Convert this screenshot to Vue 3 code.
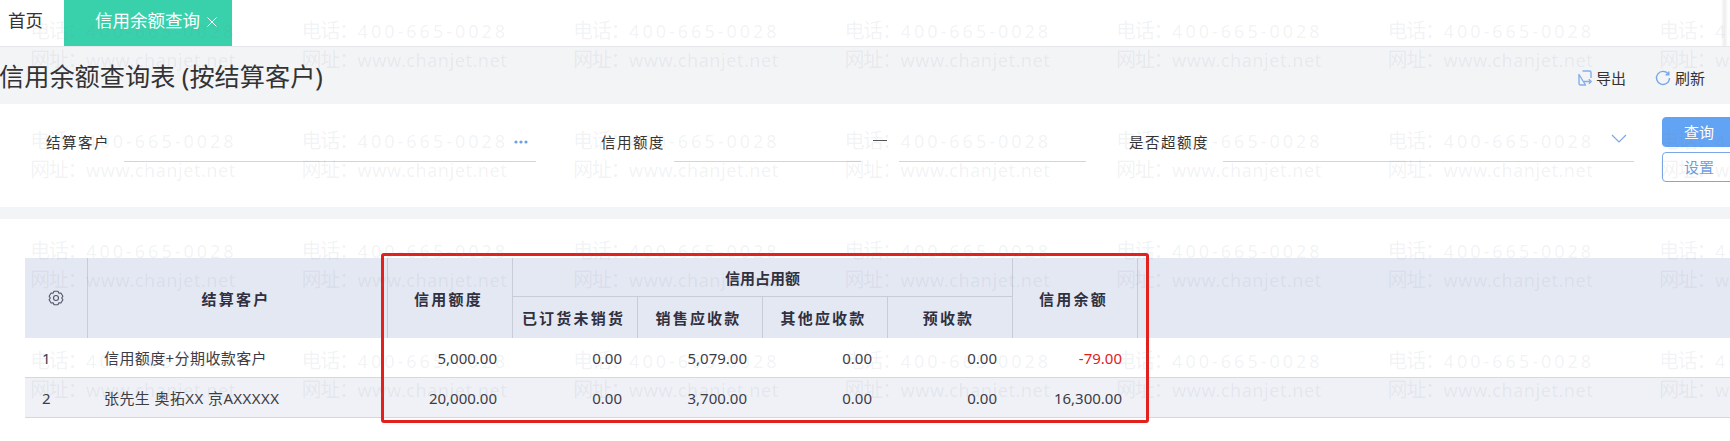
<script setup>
const wmCols = [30, 301.5, 573, 844.5, 1116, 1387.5, 1659]
const wmRows = [19, 129, 239, 349]
const marks = []
wmRows.forEach((y) => wmCols.forEach((x) => marks.push({ x, y })))
const subHeads = ['已订货未销货', '销售应收款', '其他应收款', '预收款']
const rows = [
  { no: 1, name: '信用额度+分期收款客户', limit: '5,000.00', a: '0.00', b: '5,079.00', c: '0.00', d: '0.00', rest: '-79.00', neg: true },
  { no: 2, name: '张先生 奥拓XX 京AXXXXX', limit: '20,000.00', a: '0.00', b: '3,700.00', c: '0.00', d: '0.00', rest: '16,300.00', neg: false },
]
</script>

<template>
  <div class="page">
    <nav class="tabs">
      <span class="tab-home">首页</span>
      <span class="tab-active">信用余额查询<svg class="tab-close" viewBox="0 0 10 10" width="10" height="10" fill="none" stroke="#fff" stroke-width="1"><path d="M.5.500l9 9M9.500.500l-9 9" /></svg></span>
    </nav>

    <header class="title-bar">
      <h1>信用余额查询表 (按结算客户)</h1>
      <div class="actions">
        <span class="action">
          <svg viewBox="0 0 14 16" width="14" height="16" fill="none" stroke="#82aeea" stroke-width="1.4" stroke-linejoin="round">
            <path d="M4.500 1H11.500a1.500 1.500 0 0 1 1.500 1.500V8M7.500 15H2.500A1.500 1.500 0 0 1 1 13.500V4.500z" />
            <path d="M6 11.500h7M10.800 9.300l2.400 2.200-2.400 2.200" />
          </svg>
          导出
        </span>
        <span class="action">
          <svg viewBox="0 0 16 16" width="16" height="16" fill="none" stroke="#7ba7e6" stroke-width="1.4">
            <path d="M13.400 4.300A6.500 6.500 0 1 0 14.500 8" />
            <path d="M13.800 1.500v3.200h-3.200" />
          </svg>
          刷新
        </span>
      </div>
    </header>

    <section class="filters">
      <div class="fields">
        <div class="field field-customer">
          <label>结算客户</label>
          <div class="line">
            <svg class="dots" viewBox="0 0 14 4" width="14" height="4" fill="#6f9fe0"><circle cx="2" cy="2" r="1.600" /><circle cx="7" cy="2" r="1.600" /><circle cx="12" cy="2" r="1.600" /></svg>
          </div>
        </div>
        <div class="field field-credit">
          <label>信用额度</label>
          <div class="line"></div>
          <span class="dash"></span>
          <div class="line"></div>
        </div>
        <div class="field field-over">
          <label>是否超额度</label>
          <div class="line">
            <svg class="chevron" viewBox="0 0 16 9" width="16" height="9" fill="none" stroke="#7ba7e6" stroke-width="1.2">
              <path d="M1 1l7 7 7-7" />
            </svg>
          </div>
        </div>
      </div>
      <div class="buttons">
        <button class="btn btn-primary">查询</button>
        <button class="btn btn-outline">设置</button>
      </div>
    </section>

    <div class="divider"></div>

    <section class="table-area">
      <table>
        <colgroup>
          <col class="c-no" />
          <col class="c-name" />
          <col class="c-num" span="6" />
          <col />
        </colgroup>
        <thead>
          <tr class="head-1">
            <th rowspan="2">
              <svg class="gear" viewBox="0 0 16 16" width="16" height="16" fill="none" stroke="#4f5568" stroke-width="1.1" stroke-linejoin="round">
                <path d="M6 1.300h4l.9 1.900 2-.2 2 3.200-1.200 1.800 1.200 1.800-2 3.200-2-.2-.9 1.900H6l-.9-1.900-2 .2-2-3.200L2.300 8 1.100 6.200 3.100 3l2 .2z" />
                <circle cx="8" cy="8" r="2.500" />
              </svg>
            </th>
            <th rowspan="2" class="spaced">结算客户</th>
            <th rowspan="2" class="spaced">信用额度</th>
            <th colspan="4" class="group">信用占用额</th>
            <th rowspan="2" class="spaced">信用余额</th>
            <th rowspan="2" class="filler"></th>
          </tr>
          <tr class="head-2">
            <th v-for="h in subHeads" :key="h" class="spaced">{{ h }}</th>
          </tr>
        </thead>
        <tbody>
          <tr v-for="r in rows" :key="r.no">
            <td class="no">{{ r.no }}</td>
            <td class="name">{{ r.name }}</td>
            <td class="num">{{ r.limit }}</td>
            <td class="num">{{ r.a }}</td>
            <td class="num">{{ r.b }}</td>
            <td class="num">{{ r.c }}</td>
            <td class="num">{{ r.d }}</td>
            <td class="num" :class="{ neg: r.neg }">{{ r.rest }}</td>
            <td></td>
          </tr>
        </tbody>
      </table>
    </section>

    <div class="highlight"></div>
    <div class="edge-shade"></div>

    <div class="watermarks">
      <div v-for="(m, i) in marks" :key="i" class="mark" :style="{ left: m.x + 'px', top: m.y + 'px' }">
        <div class="mark-tel"><span class="mark-key">电话：</span>400-665-0028</div>
        <div class="mark-web"><span class="mark-key">网址：</span>www.chanjet.net</div>
      </div>
    </div>
  </div>
</template>

<style>
html, body { margin: 0; background: #fff; overflow: hidden; }
</style>

<style scoped>
.page {
  position: relative;
  width: 1730px;
  height: 441px;
  overflow: hidden;
  font-family: "Noto Sans", "Noto Sans CJK SC", sans-serif;
  color: #333;
  background: #fff;
}
.tabs {
  display: flex;
  height: 46px;
  border-bottom: 1px solid #e6e7ea;
  font-size: 17.500px;
}
.tab-home {
  width: 64px;
  padding-left: 8px;
  box-sizing: border-box;
  line-height: 41px;
}
.tab-active {
  width: 168px;
  padding-left: 31px;
  box-sizing: border-box;
  background: #38d1ab;
  color: #fff;
  line-height: 41px;
}
.tab-close { margin-left: 7px; }
.title-bar {
  display: flex;
  justify-content: space-between;
  align-items: center;
  height: 57px;
  background: #f3f4f6;
}
h1 {
  margin: 2px 0 0 -1px;
  font-size: 25.200px;
  font-weight: 400;
  line-height: 57px;
  color: #333;
}
.actions {
  display: flex;
  gap: 29px;
  margin-top: 4px;
  padding-right: 25px;
  font-size: 15px;
}
.action {
  display: flex;
  align-items: center;
  gap: 4px;
}
.filters {
  display: flex;
  height: 103px;
  box-sizing: border-box;
  padding: 13px 0 0 46px;
}
.fields {
  display: flex;
  flex: none;
  width: 1616px;
  height: 45px;
}
.field {
  display: flex;
  align-items: flex-end;
}
.field label {
  font-size: 14.500px;
  letter-spacing: 1.500px;
  line-height: 20px;
  margin-bottom: 10px;
  white-space: nowrap;
}
.line {
  position: relative;
  height: 0;
  border-bottom: 1px solid #d4d5d8;
}
.field-customer { width: 555px; }
.field-customer .line { width: 412px; margin-left: 14px; }
.field-credit { width: 528px; }
.field-credit .line { width: 187px; }
.field-credit label { margin-right: 9px; }
.dash {
  width: 14px;
  height: 1px;
  margin: 0 12px 21px;
  background: #555;
}
.field-over label { margin-right: 14px; }
.field-over .line { width: 411px; }
.dots { position: absolute; right: 8px; bottom: 17px; }
.chevron { position: absolute; right: 7px; bottom: 18px; }
.buttons {
  display: flex;
  flex-direction: column;
  gap: 5px;
  flex: none;
  width: 74px;
}
.btn {
  width: 74px;
  height: 30px;
  padding: 0;
  box-sizing: border-box;
  border-radius: 4px;
  font: 15px "Noto Sans", "Noto Sans CJK SC", sans-serif;
  line-height: 26px;
}
.btn-primary { background: #62a3f3; border: 1px solid #62a3f3; color: #fff; }
.btn-outline { background: transparent; border: 1px solid #7ba7e6; color: #6f9fe0; }
.divider { height: 12px; background: #f3f4f6; }
.table-area { padding: 39px 0 0 25px; }
table {
  width: 1705px;
  table-layout: fixed;
  border-collapse: separate;
  border-spacing: 0;
}
.c-no { width: 63px; }
.c-name { width: 300px; }
.c-num { width: 125px; }
th {
  padding: 0;
  background: #e4e8f3;
  border-right: 1px solid #c8ccd6;
  font-size: 15px;
  font-weight: 700;
  color: #30303f;
  text-align: center;
}
th.filler { border-right: 0; }
.spaced { letter-spacing: 2.200px; padding-right: 3px; box-sizing: border-box; }
.group { border-bottom: 1px solid #c8ccd6; }
.head-1 { height: 39px; }
.head-2 { height: 41px; }
.gear { display: block; margin: 0 auto; }
td {
  height: 39px;
  padding: 0;
  border-bottom: 1px solid #d6d8dd;
  font-size: 15px;
  color: #3c3c44;
}
tbody tr:nth-child(2) td { background: #eff1f7; }
.no { padding-left: 17px; }
.name { padding-left: 16px; white-space: nowrap; letter-spacing: 0.400px; }
.num { padding-right: 16px; text-align: right; }
.neg { color: #e3201b; }
.highlight {
  position: absolute;
  left: 381px;
  top: 253px;
  width: 768px;
  height: 170px;
  box-sizing: border-box;
  border: 3px solid #e3201b;
  border-radius: 3px;
  pointer-events: none;
}
.edge-shade {
  position: absolute;
  left: 1721px;
  top: 0;
  width: 7px;
  height: 46px;
  background: linear-gradient(to right, rgba(0, 0, 0, 0), rgba(0, 0, 0, 0.07), rgba(0, 0, 0, 0));
  pointer-events: none;
}
.watermarks {
  position: absolute;
  inset: 0;
  pointer-events: none;
}
.mark {
  position: absolute;
  font-size: 18px;
  line-height: 24px;
  color: rgba(120, 130, 150, 0.1);
  white-space: nowrap;
}
.mark-tel { letter-spacing: 3px; height: 29px; }
.mark-web { letter-spacing: 0.550px; }
.mark-key { font-size: 20px; letter-spacing: -1.300px; }
</style>
